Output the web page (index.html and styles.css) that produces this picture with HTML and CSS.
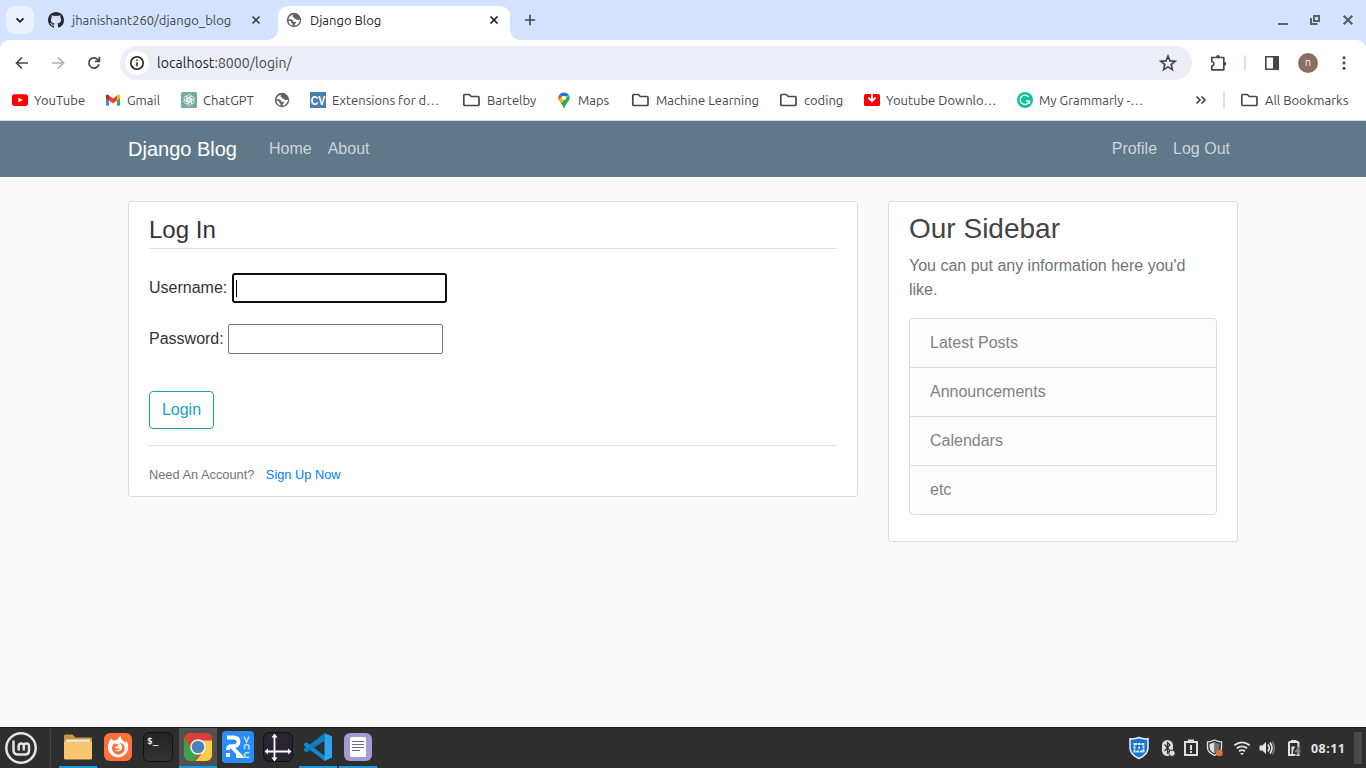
FILE: index.html
```html
<!DOCTYPE html>
<html lang="en">
<head>
<meta charset="utf-8">
<title>Django Blog</title>
<link rel="stylesheet" href="styles.css">
</head>
<body>
<svg class="defs" width="0" height="0">
  <symbol id="globe" viewBox="0 0 16 16"><circle cx="8" cy="8" r="7.200" fill="#5f6368"/><path d="M8.500 2.200Q6.400 2.800 6.500 4.200q.2 1.300 1.700 1.300l.3 1.400q1.400-.2 2 .6t2.000.5q1-.7 1.500.2-.4 3.300-3.500 5.000l-2 .4q-.2-1.500.8-2t.7-1.500H8.300q-1.200-.1-1.500-1.500T5 7.300H2.400Q3.200 3.200 8.500 2.200zM2.400 8.700q2.400-.2 2.600 1.300t1.500 1.400v2.200Q3 12.700 2.400 8.700z" fill="#fff"/></symbol>
  <symbol id="folder" viewBox="0 0 18 16"><path d="M2.800 2.500h4.500l2 2h6.700q1 0 1 1v7q0 1-1 1H2.800q-1 0-1-1v-9q0-1 1-1z" fill="none" stroke="#474747" stroke-width="1.700" stroke-linejoin="round"/></symbol>
  <symbol id="close" viewBox="0 0 16 16"><path d="M4.500 4.500l7 7M11.500 4.500l-7 7" fill="none" stroke="currentColor" stroke-width="1.700"/></symbol>
</svg>

<header class="browser">
  <div class="tabstrip">
    <button class="tab-search"><svg width="16" height="16" viewBox="0 0 16 16"><path d="M4.500 6.300 8 9.800l3.500-3.500" fill="none" stroke="#1f1f1f" stroke-width="1.800"/></svg></button>
    <div class="tab">
      <svg width="16" height="16" viewBox="0 0 16 16"><path fill="#24292f" d="M8 0C3.580 0 0 3.580 0 8c0 3.540 2.290 6.530 5.470 7.590.4.070.55-.17.55-.38 0-.19-.01-.82-.01-1.490-2.010.37-2.530-.49-2.690-.94-.09-.23-.48-.94-.82-1.130-.28-.15-.68-.52-.01-.53.63-.01 1.080.58 1.230.82.72 1.210 1.870.87 2.330.66.07-.52.28-.87.51-1.070-1.780-.2-3.640-.89-3.640-3.950 0-.87.31-1.590.82-2.150-.08-.2-.36-1.020.08-2.120 0 0 .67-.21 2.200.82.64-.18 1.320-.27 2-.27s1.360.09 2 .27c1.530-1.040 2.200-.82 2.200-.82.44 1.100.16 1.920.08 2.120.51.56.82 1.270.82 2.150 0 3.070-1.870 3.750-3.650 3.950.29.25.54.73.54 1.480 0 1.070-.01 1.930-.01 2.200 0 .21.15.46.55.38A8.010 8.010 0 0 0 16 8c0-4.420-3.580-8-8-8z"/></svg>
      <span class="tab-title">jhanishant260/django_blog</span>
      <svg class="tab-close" width="16" height="16"><use href="#close"/></svg>
    </div>
    <div class="tab tab-active">
      <svg width="16" height="16"><use href="#globe"/></svg>
      <span class="tab-title">Django Blog</span>
      <svg class="tab-close" width="16" height="16"><use href="#close"/></svg>
    </div>
    <svg class="new-tab" width="16" height="16" viewBox="0 0 16 16"><path d="M8 2.800v10.400M2.800 8h10.400" stroke="#474747" stroke-width="1.600"/></svg>
    <div class="window-buttons">
      <svg width="16" height="16" viewBox="0 0 16 16"><path d="M3 12h10" stroke="#5a5e66" stroke-width="2"/></svg>
      <svg width="16" height="16" viewBox="0 0 16 16"><path d="M7 4h5v5H7zM4 6v6h6.500" fill="none" stroke="#5a5e66" stroke-width="2"/></svg>
      <svg width="16" height="16" viewBox="0 0 16 16"><path d="M3.700 3.700l8.600 8.600M12.300 3.700l-8.600 8.600" stroke="#5a5e66" stroke-width="2.200"/></svg>
    </div>
  </div>

  <div class="toolbar">
    <div class="nav-buttons">
      <svg width="16" height="16" viewBox="0 0 16 16"><path d="M14 8H3M8 2.500 2.500 8 8 13.500" fill="none" stroke="#474747" stroke-width="1.700"/></svg>
      <svg width="16" height="16" viewBox="0 0 16 16"><path d="M2 8h11M8 2.500 13.500 8 8 13.500" fill="none" stroke="#b0b0b0" stroke-width="1.700"/></svg>
      <svg width="16" height="16" viewBox="0 0 16 16"><path d="M12.900 9.200a5.100 5.100 0 1 1-.8-4.200l1.200 1.400M13.400 1.800v4.500H8.900" fill="none" stroke="#474747" stroke-width="1.700"/></svg>
    </div>
    <div class="omnibox">
      <span class="site-info"><svg width="16" height="16" viewBox="0 0 16 16"><circle cx="8" cy="8" r="6.200" fill="none" stroke="#1f1f1f" stroke-width="1.600"/><path d="M8 7.300v4M8 4.500v1.600" stroke="#1f1f1f" stroke-width="1.500"/></svg></span>
      <span class="url"><b>localhost</b>:8000/login/</span>
      <svg class="star" width="18" height="18" viewBox="0 0 18 18"><path d="M9 2.200l2 4.700 5 .4-3.800 3.300 1.200 5L9 12.900l-4.400 2.700 1.200-5L2 7.300l5-.4z" fill="none" stroke="#474747" stroke-width="1.700"/></svg>
    </div>
    <svg class="puzzle" width="18" height="18" viewBox="0 0 18 18"><path d="M2.800 3.500h12v12.300h-12v-3.800q2-.3 2-2.200t-2-2.300z" fill="none" stroke="#474747" stroke-width="1.700" stroke-linejoin="round"/><path d="M7 3q0-2 2-2t2 2zM15 7.700q2.300.2 2.300 2.100T15 11.800z" fill="#474747"/></svg>
    <i class="divider"></i>
    <svg class="panel" width="16" height="16" viewBox="0 0 16 16"><path d="M1.800 1.800h12.400v12.400H1.800z" fill="none" stroke="#474747" stroke-width="1.600"/><path d="M9 1.500h5.500v13H9z" fill="#474747"/></svg>
    <span class="avatar">n</span>
    <svg class="menu" width="16" height="16" viewBox="0 0 16 16" fill="#474747"><circle cx="8" cy="2.800" r="1.500"/><circle cx="8" cy="8" r="1.500"/><circle cx="8" cy="13.200" r="1.500"/></svg>
  </div>

  <nav class="bookmarks">
    <a><svg width="16" height="16" viewBox="0 0 16 16"><rect y="2.300" width="16" height="11.600" rx="2.600" fill="#f00"/><path d="M6.300 5.600v5L10.800 8z" fill="#fff"/></svg><span>YouTube</span></a>
    <a><svg width="16" height="16" viewBox="0 0 16 16"><path d="M1 4v9q0 .8.800.8H4V6z" fill="#4285f4"/><path d="M12 6v7.800h2.200q.8 0 .8-.8V4z" fill="#34a853"/><path d="M4 3.600v4.800L8 11.400l4-3V3.600L8 6.600z" fill="#ea4335"/><path d="M1 4q0-2 2-1.200l1 .8v4.800L1 6.200z" fill="#c5221f"/><path d="M15 4q0-2-2-1.200l-1 .8v4.800l3-2.200z" fill="#fbbc04"/></svg><span>Gmail</span></a>
    <a><svg width="16" height="16" viewBox="0 0 16 16"><rect width="16" height="16" rx="1.500" fill="#74aa9c"/><g fill="none" stroke="#fff" stroke-width=".7"><path id="petal" d="M5.900 9.200V4.800a2.400 2.400 0 0 1 4.400-1.200L6.900 5.600v3.600"/><use href="#petal" transform="rotate(60 8 8)"/><use href="#petal" transform="rotate(120 8 8)"/><use href="#petal" transform="rotate(180 8 8)"/><use href="#petal" transform="rotate(240 8 8)"/><use href="#petal" transform="rotate(300 8 8)"/></g></svg><span>ChatGPT</span></a>
    <a><svg width="16" height="16"><use href="#globe"/></svg></a>
    <a><i class="cv"><b>CV</b></i><span>Extensions for d…</span></a>
    <a class="dir"><svg width="18" height="16"><use href="#folder"/></svg><span>Bartelby</span></a>
    <a><svg width="16" height="16" viewBox="0 0 16 16"><path d="M3.400 2.500 8 6.200 12.900 3.100A6 6 0 0 0 3.400 2.500z" fill="#1a73e8"/><path d="M3.400 2.500A6 6 0 0 0 2.600 8L8 6z" fill="#ea4335"/><path d="M2.600 8q.7 1.500 2.200 3.300L10 5 6 4z" fill="#fbbc04"/><path d="M4.800 11.300Q7 13.400 7.400 15.500q.6 1 1.200 0 .5-2.300 2.400-4.200 4.300-4.500 1.900-8.200z" fill="#34a853"/><circle cx="8" cy="5.900" r="2.100" fill="#fff"/></svg><span>Maps</span></a>
    <a class="dir"><svg width="18" height="16"><use href="#folder"/></svg><span>Machine Learning</span></a>
    <a class="dir"><svg width="18" height="16"><use href="#folder"/></svg><span>coding</span></a>
    <a><svg width="16" height="16" viewBox="0 0 16 16"><rect y="2" width="16" height="12" rx="1.500" fill="#f00"/><path d="M8 2v6M4.500 5.800 8 9.200l3.500-3.400" fill="none" stroke="#fff" stroke-width="1.900"/></svg><span>Youtube Downlo…</span></a>
    <a><svg width="16" height="16" viewBox="0 0 16 16"><circle cx="8" cy="8" r="8" fill="#15c39a"/><path d="M11.600 4.900A4.700 4.700 0 1 0 12.400 9H9M12.500 8.500v3.600" fill="none" stroke="#fff" stroke-width="1.300"/></svg><span>My Grammarly -…</span></a>
    <a class="more"><svg width="12" height="12" viewBox="0 0 12 12"><path d="M1.500 2.500 5 6 1.500 9.500M6.500 2.500 10 6 6.500 9.500" fill="none" stroke="#474747" stroke-width="1.700"/></svg></a>
    <i class="divider"></i>
    <a class="dir"><svg width="18" height="16"><use href="#folder"/></svg><span>All Bookmarks</span></a>
  </nav>
</header>

<div class="page">
  <header class="site-header">
    <div class="container">
      <a class="brand">Django Blog</a>
      <a class="nav-link">Home</a>
      <a class="nav-link">About</a>
      <a class="nav-link first-right">Profile</a>
      <a class="nav-link">Log Out</a>
    </div>
  </header>
  <main class="container columns">
    <section class="content-section login">
      <h1 class="legend">Log In</h1>
      <div class="field"><label>Username:</label><div class="input focused"><i class="caret"></i></div></div>
      <div class="field"><label>Password:</label><div class="input"></div></div>
      <button class="login-button">Login</button>
      <p class="signup">Need An Account? <a>Sign Up Now</a></p>
    </section>
    <aside class="content-section sidebar">
      <h3>Our Sidebar</h3>
      <p>You can put any information here you'd like.</p>
      <ul>
        <li>Latest Posts</li>
        <li>Announcements</li>
        <li>Calendars</li>
        <li>etc</li>
      </ul>
    </aside>
  </main>
</div>

<footer class="taskbar">
  <svg class="mint" width="34" height="34" viewBox="0 0 34 34"><circle cx="17" cy="17" r="14.700" fill="none" stroke="#e4e4e4" stroke-width="2.500"/><path d="M9.500 9.500v9.500q0 4.500 4.500 4.500h7q4 0 4-4v-4.500q0-2.600-2.600-2.600T19.800 15v4.500M19.800 15q0-2.600-2.500-2.600T14.700 15v4.500" fill="none" stroke="#e4e4e4" stroke-width="2.500"/></svg>
  <i class="task-divider"></i>
  <div class="tasks">
    <div class="task open"><svg width="30" height="30" viewBox="0 0 30 30"><path d="M1 4q0-1.500 1.500-1.500h7l3 3H28q1 0 1 1V12H1z" fill="#c9973f"/><path d="M3 7.500h24V11H3z" fill="#eee"/><path d="M1 9.500h28v16.500q0 1.500-1.500 1.500h-25Q1 27.500 1 26z" fill="#f8c570"/></svg></div>
    <div class="task"><svg width="30" height="30" viewBox="0 0 30 30"><rect x="1" y="1" width="28" height="28" rx="6" fill="#ff7139"/><path d="M8 6.500 10.500 8.800Q12.500 7.800 14.500 8q.3-2.500 3-4 .2 2.800 2.800 4.800L22.800 11l.2-2.500q3 4 2 9a10.200 10.200 0 0 1-20-.5Q4.500 11.500 8 6.500z" fill="#fff"/><path d="M11 11.300q1.700 1.200 4.700.9-.4 1.800-2.600 2.200l-1.500 1.200q1.500 1.700 4.200.7 1.500.1.500 1.200-2 1.200-5 .4 3 2.400 6.200.5 2.700-2 1.200-5.200-.8-1.800-2.700-2.500 5 .2 5.700 5a6.300 6.300 0 0 1-12.600 1.300q-.4-2 .5-3.300z" fill="#ff7139"/></svg></div>
    <div class="task"><span class="terminal">$_</span></div>
    <div class="task open current"><svg width="30" height="30" viewBox="0 0 30 30"><clipPath id="chrome-clip"><rect x="1" y="1" width="28" height="28" rx="6"/></clipPath><g clip-path="url(#chrome-clip)"><path d="M0 0h30v30H0z" fill="#d9403a"/><path d="M0 3 8.500 18.500l7 3.500-5 9H0z" fill="#3fa046"/><path d="M15 8.500h16V31H11l10-12z" fill="#ffce44"/></g><circle cx="15" cy="15" r="7.800" fill="#f5f5f5"/><circle cx="15" cy="15" r="6.300" fill="#4b85b8"/></svg></div>
    <div class="task"><svg width="32" height="32" viewBox="0 0 32 32"><rect width="32" height="32" rx="4" fill="#288cf4"/><path d="M5 6.500h6.500q5 0 5 4.300t-5 4.300H9.500q-3.500 0-3.500 3.400v.500M6 22v4M10 16l8.500 9H14" fill="none" stroke="#fff" stroke-width="3.800"/><path d="M22 5.500l2.500 5.500L27 5.500M22.500 18.500V16q0-2.500 2.200-2.500T27 16v2.500M27.300 21.800q-4.800-.8-4.800 2.200t4.800 2.200" fill="none" stroke="#b9dafd" stroke-width="1.600"/></svg></div>
    <div class="task"><svg width="30" height="30" viewBox="0 0 30 30"><rect x=".5" y=".5" width="29" height="29" rx="6" fill="#2a2431" stroke="#121015"/><path d="M11.500 4v23M3 19.500h24" stroke="#fff" stroke-width="1.800"/><path d="M8.500 5.500 11.500 1.500l3 4zM8.500 25.500l3 4 3-4zM5 16.500 1.500 19.500 5 22.500zM25 16.500l3.500 3-3.500 3z" fill="#fff"/></svg></div>
    <div class="task open"><svg width="30" height="30" viewBox="0 0 30 30"><path d="M21.500 1.500 3.300 19.800 1 18.500v-2.000L21.500 1.500z" fill="#0877b9"/><path d="M1 11.500 3.300 10.300 22 24v5L1 13.500z" fill="#1689ca"/><path d="M1 18.500 21.500 1v8L3.300 20.500z" fill="#0f7dbf"/><path d="M21.500 1 29 4.500v21L21.500 29z" fill="#2aa7ef"/></svg></div>
    <div class="task open"><svg width="30" height="30" viewBox="0 0 30 30"><rect x="1" y="1" width="28" height="28" rx="6" fill="#a49bd4"/><rect x="7" y="5" width="16" height="20" rx="1.500" fill="#fff"/><path d="M9 9.500h12M9 12.500h12M9 15.500h12M9 18.500h8" stroke="#6b678e"/></svg></div>
  </div>
  <div class="tray">
    <svg width="22" height="24" viewBox="0 0 22 24"><path d="M11 1.500q4.500 1.800 9 1.300V12q0 6.500-9 10.500Q2 18.500 2 12V2.800Q6.500 3.300 11 1.500z" fill="#1777cf" stroke="#e8f3ff" stroke-width="1.500"/><path d="M6.500 8h9v7.500h-9z" fill="none" stroke="#e8f3ff" stroke-width="1.800" stroke-dasharray="2.800 .7"/><path d="M10 10.800h2v2h-2z" fill="#e8f3ff"/></svg>
    <svg width="22" height="22" viewBox="0 0 22 22"><rect x="5" y="3" width="11" height="16" rx="5.500" fill="#dfdfdf"/><path d="M7.500 7.500 13 13.500l-2.500 2.500V5.500L13 8l-5.500 6" fill="none" stroke="#2e2e2e" stroke-width="1.200"/><circle cx="15" cy="16.200" r="3.200" fill="#dfdfdf" stroke="#2e2e2e"/></svg>
    <svg width="22" height="22" viewBox="0 0 22 22"><path d="M5 5h12v13H5z" fill="none" stroke="#dfdfdf" stroke-width="2"/><path d="M8 2.500h6V6H8z" fill="#dfdfdf"/><path d="M11 8v5M11 14v2" stroke="#dfdfdf" stroke-width="2"/></svg>
    <svg width="22" height="22" viewBox="0 0 22 22"><path d="M10.500 3q3.500 2 7 1.900v5.500q0 5-7 8-7-3-7-8V4.900Q7 5 10.500 3z" fill="#2e2e2e" stroke="#dfdfdf" stroke-width="1.400"/><path d="M10.500 5v11.500Q5.500 14 5.500 10V6.800Q8 6.500 10.500 5z" fill="#dfdfdf"/><path d="M10.500 5v11.500Q15.500 14 15.500 10V6.800Q13 6.500 10.500 5z" fill="#777"/><circle cx="15.500" cy="16" r="3.300" fill="#e0703a"/></svg>
    <svg width="22" height="22" viewBox="0 0 22 22"><g fill="none" stroke="#dfdfdf" stroke-width="1.900"><path d="M3.300 8.300q7.700-5.800 15.400 0M5.800 11.300q5.200-3.800 10.400 0M8 14.200q3-2.200 6 0"/></g><path d="M9 16h4l-2 2.300z" fill="#dfdfdf"/></svg>
    <svg width="22" height="22" viewBox="0 0 22 22"><path d="M3.500 8.500h2.800L10 5v12l-3.700-3.500H3.500z" fill="#e4e4e4"/><path d="M12 7.500q2.500 3.500 0 7M14 5.500q4 5.500 0 11" fill="none" stroke="#e4e4e4" stroke-width="1.700"/><path d="M16.200 4.500q4.500 6.500 0 13" fill="none" stroke="#777" stroke-width="1.600"/></svg>
    <svg width="22" height="22" viewBox="0 0 22 22"><path d="M8 5h6.500q1 0 1 1v12H6V6q0-1 1-1z" fill="none" stroke="#e4e4e4" stroke-width="2"/><path d="M8 3h5.500v3H8zM8.500 9.500H12L10 14v3H8.500z" fill="#e4e4e4"/><path d="M16.500 9 10.500 15.200h3.500L12 19.500l7-6.300h-3.500L18 9.500z" fill="#8a8a8a" stroke="#2e2e2e" stroke-width=".5"/></svg>
    <time>08:11</time>
    <i class="show-desktop"></i>
  </div>
</footer>
</body>
</html>
```
FILE: styles.css
```css
* { box-sizing: border-box; }
body {
  margin: 0;
  width: 1366px;
  height: 768px;
  overflow: hidden;
  display: flex;
  flex-direction: column;
  background: #fafafa;
  font-family: "Liberation Sans", Arial, sans-serif;
}
svg { display: block; flex: none; }
.defs { position: absolute; }
button { font: inherit; padding: 0; }

/* Browser window */
.browser {
  height: 121px;
  flex: none;
  background: #d3e3fd;
  font-family: Ubuntu, "Noto Sans", sans-serif;
  font-size: 13px;
  color: #474747;
}
.tabstrip { display: flex; height: 40px; padding: 0 10px 0 6px; }
.tab-search {
  width: 28px; height: 28px; margin-top: 6px;
  display: grid; place-items: center;
  border: 0; border-radius: 9px; background: #ebf2fe;
}
.tab { display: flex; align-items: center; width: 230px; height: 34px; margin-top: 6px; padding: 0 0 6px 14px; color: #474747; }
.tab-title { margin-left: 8px; white-space: nowrap; }
.tab-close { margin-left: auto; }
.tab-active {
  position: relative;
  width: 232px; margin-left: 14px; padding: 0 8px 6px;
  background: #fff; color: #1f1f1f; border-radius: 10px 10px 0 0;
}
.tab-active::before, .tab-active::after {
  content: ""; position: absolute; bottom: 0; width: 10px; height: 10px;
}
.tab-active::before { left: -10px; background: radial-gradient(circle at 0 0, transparent 9.500px, #fff 10px); }
.tab-active::after { right: -10px; background: radial-gradient(circle at 100% 0, transparent 9.500px, #fff 10px); }
.new-tab { margin: 12px 0 0 12px; }
.window-buttons { display: grid; grid-template-columns: 32px 33px 16px; margin: 12px 0 0 auto; }
.toolbar { display: flex; align-items: center; height: 46px; background: #fff; border-radius: 9px 9px 0 0; }
.nav-buttons { display: flex; gap: 20px; width: 120px; padding-left: 14px; }
.omnibox { display: flex; align-items: center; width: 1072px; height: 34px; border-radius: 17px; background: #ebeef7; padding: 0 15px 0 5px; }
.site-info { display: grid; place-items: center; width: 24px; height: 24px; border-radius: 50%; background: #fff; }
.url { margin-left: 8px; font-size: 14px; letter-spacing: 0.050px; }
.url b { font-weight: 400; color: #1f1f1f; }
.star { margin-left: auto; }
.puzzle { margin-left: 17px; }
.divider { width: 2px; height: 16px; background: #d3e3fd; border-radius: 1px; }
.toolbar .divider { margin-left: 17px; }
.panel { margin-left: 18px; }
.avatar { width: 20px; height: 20px; margin-left: 18px; border-radius: 50%; background: #8d6e63; color: #f5efed; font-size: 11px; line-height: 19px; text-align: center; }
.menu { margin-left: 18px; }
.bookmarks {
  display: grid; align-items: center;
  grid-template-columns: 93px 76px 93px 36px 152px 94px 75px 148px 85px 153px 178px 28px 17px auto;
  height: 35px; padding: 0 0 7px 12px;
  background: #fff; border-bottom: 1px solid #d8dce2;
}
.bookmarks a { display: flex; align-items: center; gap: 6px; white-space: nowrap; }
.bookmarks .dir { gap: 7px; }
.bookmarks .divider { margin: 0; }
.cv { width: 16px; height: 16px; overflow: hidden; background: #4a80ad; color: #fff; font: normal 13px/17px "Liberation Sans", Arial, sans-serif; text-align: center; }
.cv b { display: block; width: 18px; margin-left: -1px; transform: scaleX(0.8); }

/* Site */
.page { flex: 1; color: #333; font-size: 16px; line-height: 24px; }
.site-header { height: 56px; background: #5f788a; }
.container { width: 1110px; margin: 0 auto; }
.site-header .container { display: flex; align-items: center; height: 56px; }
.brand { margin-right: 24px; color: #fff; font-size: 20px; }
.nav-link { padding: 0 8px; color: #cbd5db; }
.first-right { margin-left: auto; }
.columns { display: grid; grid-template-columns: 730px 350px; gap: 30px; align-items: start; padding-top: 24px; }
.content-section { border: 1px solid #ddd; border-radius: 3px; background: #fff; padding: 10px 20px; }
.login { height: 296px; }
.legend { margin: 0 0 24px; height: 37px; border-bottom: 1px solid #dee2e6; font-size: 24px; line-height: 36px; font-weight: 400; }
.field { display: flex; align-items: center; height: 30px; margin-bottom: 21px; }
.field label { margin-right: 4.500px; }
.input { width: 215px; height: 30px; border: 1px solid #767676; border-radius: 2px; background: #fff; }
.focused { border: 2px solid #101010; border-radius: 3px; padding: 5px 0 0 2px; }
.caret { display: block; width: 1px; height: 17px; background: #000; }
.login-button { display: block; width: 65px; height: 38px; margin-top: 37px; border: 1px solid #17a2b8; border-radius: 4px; background: #fff; color: #17a2b8; }
.signup { margin: 16px 0 0; border-top: 1px solid #dee2e6; padding-top: 17px; font-size: 12.800px; color: #6c757d; }
.signup a { margin-left: 8px; color: #007bff; }
.sidebar { height: 341px; color: #444; }
.sidebar h3 { margin: 0 0 8px; font-size: 28px; line-height: 33.600px; font-weight: 400; }
.sidebar p { margin: 0 0 16px; color: #6c757d; }
.sidebar ul { list-style: none; margin: 0; padding: 0; border: 1px solid #dcdddd; border-radius: 4px; background: #fdfdfe; color: #818182; }
.sidebar li { height: 49px; padding: 12px 20px; border-bottom: 1px solid #dcdddd; }
.sidebar li:last-child { height: 48px; border-bottom: 0; }

/* Desktop panel */
.taskbar { display: flex; align-items: center; flex: none; height: 41px; padding-left: 4px; background: #2e2e2e; border-top: 1px solid #1f1f1f; }
.task-divider { width: 1px; height: 38px; margin: 0 8px 0 12px; background: #454545; }
.tasks { display: flex; gap: 2px; height: 40px; }
.task { display: grid; place-items: center; width: 38px; height: 40px; border-bottom: 2px solid transparent; }
.open { border-color: #1c9ade; }
.current { background: #515151; }
.terminal { width: 30px; height: 30px; padding: 2px 0 0 3px; border: 1px solid #111; border-radius: 6px; background: linear-gradient(#242424, #333); color: #eee; font: bold 9.500px/11px "DejaVu Sans Mono", monospace; }
.tray { display: grid; grid-template-columns: 29px 23px 24px 27px 25px 27px 28px 43px 8px; align-items: center; margin: 0 4px 0 auto; height: 40px; }
.tray time { color: #e4e4e4; font: bold 12.500px "Noto Sans", sans-serif; letter-spacing: 0.450px; }
.show-desktop { height: 32px; background: #484848; }
```
